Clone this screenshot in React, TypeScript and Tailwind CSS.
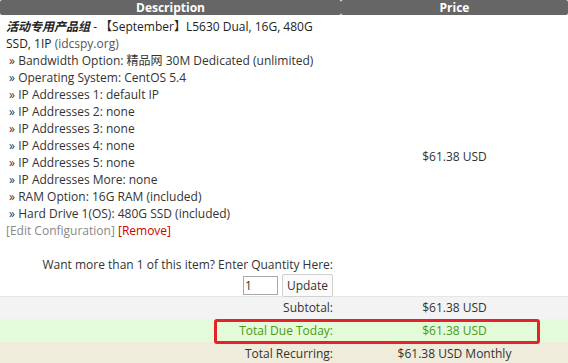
import type { ReactNode } from "react";

const OPTIONS = [
  ["Bandwidth Option", "精品网 30M Dedicated (unlimited)"],
  ["Operating System", "CentOS 5.4"],
  ["IP Addresses 1", "default IP"],
  ["IP Addresses 2", "none"],
  ["IP Addresses 3", "none"],
  ["IP Addresses 4", "none"],
  ["IP Addresses 5", "none"],
  ["IP Addresses More", "none"],
  ["RAM Option", "16G RAM (included)"],
  ["Hard Drive 1(OS)", "480G SSD (included)"],
];

function TotalRow({
  label,
  value,
  className,
  children,
}: {
  label: string;
  value: string;
  className: string;
  children?: ReactNode;
}) {
  return (
    <div className={`relative grid grid-cols-[341px_227px] ${className}`}>
      <div className="pr-[8px] text-right">{label}</div>
      <div className="text-center">{value}</div>
      {children}
    </div>
  );
}

export default function App() {
  return (
    <div
      className="w-[568px] h-[363px] overflow-hidden bg-white text-[12px] leading-[17px] text-[#333]"
      style={{ fontFamily: '"Open Sans", "Noto Sans CJK SC", sans-serif' }}
    >
      <div className="grid grid-cols-[341px_227px]">
        <div className="h-[15px] rounded-[2px] bg-[#666] text-center font-bold leading-[15px] text-white">
          Description
        </div>
        <div className="h-[15px] rounded-[2px] bg-[#666] text-center font-bold leading-[15px] text-white">
          Price
        </div>
      </div>

      <div className="grid grid-cols-[341px_227px] h-[282px] border-b border-[#e6e6e6]">
        <div className="pl-[6px] pr-[8px] pt-[2px]">
          <div className="text-[#222]">
            <em className="font-bold" style={{ fontFamily: '"Noto Sans CJK SC", sans-serif' }}>
              活动专用产品组
            </em>{" "}
            - 【September】L5630 Dual, 16G, 480G
            <br />
            SSD, 1IP <span className="text-[#555]">(idcspy.org)</span>
          </div>
          {OPTIONS.map(([name, value]) => (
            <div key={name}>
              &nbsp;» {name}: {value}
            </div>
          ))}
          <div>
            <span className="text-[#888]">[Edit Configuration]</span>{" "}
            <span className="text-[#cc0000]">[Remove]</span>
          </div>
          <div className="h-[17px]" />
          <div className="text-right">Want more than 1 of this item? Enter Quantity Here:</div>
          <div className="flex items-center justify-end gap-[4px] pt-[1px]">
            <input
              defaultValue="1"
              className="h-[19px] w-[35px] border border-[#a9a9a9] px-[1px] text-[12px] text-[#333] outline-none"
            />
            <button className="h-[23px] w-[51px] rounded-[2px] border border-[#d0d0d0] bg-[#fbfbfb] text-[12px] text-[#333]">
              Update
            </button>
          </div>
        </div>
        <div className="flex items-center justify-center">$61.38 USD</div>
      </div>

      <TotalRow label="Subtotal:" value="$61.38 USD" className="h-[22px] bg-[#f3f3f3] pt-[2px]" />
      <TotalRow
        label="Total Due Today:"
        value="$61.38 USD"
        className="h-[23px] bg-[#e3fbd9] pt-[3px] text-[#4a9a16]"
      >
        {/* highlight frame drawn over the row, spills a little into the next one */}
        <div className="absolute left-[214px] top-0 z-10 h-[25px] w-[326px] rounded-[3px] border-[3px] border-[#e5212b]" />
      </TotalRow>
      <TotalRow
        label="Total Recurring:"
        value="$61.38 USD Monthly"
        className="h-[21px] bg-[#f0ecdb] pt-[3px]"
      />
    </div>
  );
}
